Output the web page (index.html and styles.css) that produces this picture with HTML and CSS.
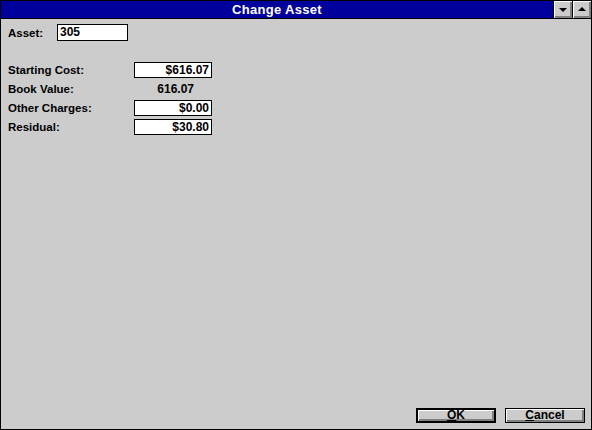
FILE: index.html
```html
<!DOCTYPE html>
<html>
<head>
<meta charset="utf-8">
<link rel="stylesheet" href="styles.css">
</head>
<body>
<div class="window">
  <div class="titlebar">
    <div class="title">Change Asset</div>
    <div class="tbtn"><span class="tri-down"></span></div>
    <div class="tbtn"><span class="tri-up"></span></div>
  </div>
  <div class="content">
    <div class="asset-row">
      <span class="label asset-label">Asset:</span>
      <div class="field asset-field">305</div>
    </div>
    <div class="form">
      <span class="label">Starting Cost:</span>
      <div class="field num">$616.07</div>
      <span class="label">Book Value:</span>
      <div class="value">616.07</div>
      <span class="label">Other Charges:</span>
      <div class="field num">$0.00</div>
      <span class="label">Residual:</span>
      <div class="field num">$30.80</div>
    </div>
    <div class="footer">
      <div class="btn default"><span class="face"><u>O</u>K</span></div>
      <div class="btn"><span class="face"><u>C</u>ancel</span></div>
    </div>
  </div>
</div>
</body>
</html>
```
FILE: styles.css
```css
* { box-sizing: border-box; }
html, body { margin: 0; padding: 0; background: #cccccc; }
body {
  font-family: "Liberation Sans", Arial, sans-serif;
  font-weight: bold;
  font-size: 11.5px;
  color: #000;
}
.window {
  width: 592px;
  height: 430px;
  border: 1px solid #000;
  background: #cccccc;
  display: flex;
  flex-direction: column;
}
.titlebar {
  height: 18px;
  border-bottom: 1px solid #000;
  background: #00009c;
  display: flex;
  flex: none;
}
.title {
  flex: 1;
  text-align: center;
  color: #fff;
  font-size: 13px;
  letter-spacing: 0.3px;
  line-height: 17px;
}
.tbtn {
  width: 19px;
  height: 17px;
  border-left: 1px solid #000;
  background: #cccccc;
  box-shadow: inset 1px 1px #fff, inset -1px -1px #808080, inset -2px -2px #808080;
  display: flex;
  align-items: center;
  justify-content: center;
}
.tri-down, .tri-up {
  width: 0; height: 0;
  border-left: 4px solid transparent;
  border-right: 4px solid transparent;
}
.tri-down { border-top: 4px solid #000; margin-top: 1px; }
.tri-up { border-bottom: 4px solid #000; margin-top: -1px; }
.content {
  flex: 1;
  display: flex;
  flex-direction: column;
  padding: 5px 5px 6px 7px;
}
.asset-row {
  display: flex;
  align-items: center;
  height: 17px;
}
.asset-label { width: 49px; }
.field {
  height: 16px;
  background: #fff;
  border: 1px solid #000;
  line-height: 14px;
  padding: 0 2px;
  font-size: 12px;
}
.asset-field { width: 71px; height: 17px; line-height: 15px; padding-left: 2px; }
.form {
  margin-top: 19px;
  display: grid;
  grid-template-columns: 126px 78px;
  grid-auto-rows: 19px;
  align-items: center;
}
.num { text-align: right; }
.value { text-align: right; padding-right: 18px; font-size: 12px; }
.footer {
  margin-top: auto;
  display: flex;
  justify-content: flex-end;
  gap: 9px;
}
.btn {
  width: 80px;
  height: 15px;
  border: 1px solid #000;
  background: #cccccc;
  display: flex;
}
.btn.default { border-width: 2px; }
.face {
  flex: 1;
  text-align: center;
  line-height: 12px;
  font-size: 12px;
  box-shadow: inset 1px 1px #fff, inset -1px -1px #808080, inset -2px -2px #808080;
}
.btn.default .face { line-height: 10px; }
.footer .btn:last-child { margin-right: 1px; }
```
